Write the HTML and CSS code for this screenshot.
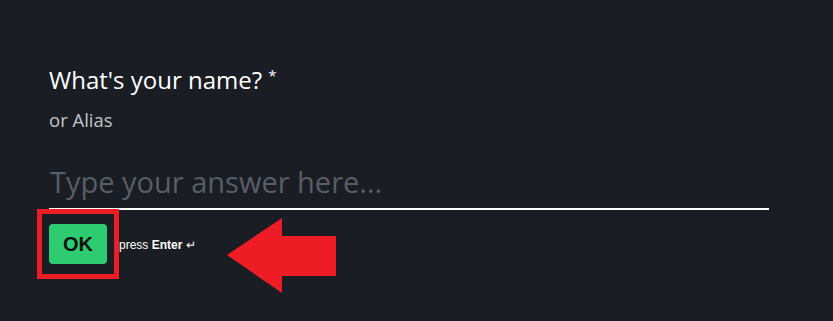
FILE: index.html
```html
<!DOCTYPE html>
<html>
<head>
  <title>Name question</title>
  <link rel="stylesheet" href="styles.css">
</head>
<body>
  <!-- Question block -->
  <div class="question">
    <h2 class="question-title">What's your name? <span class="required">*</span></h2>
    <div class="question-hint">or Alias</div>

    <input type="text" class="answer" placeholder="Type your answer here...">

    <div class="actions">
      <button class="ok-btn">OK</button>
      <span class="press-hint">press <b>Enter</b> &#8629;</span>

      <!-- Annotations drawn over the screenshot -->
      <div class="highlight-box"></div>
      <svg class="arrow" width="110" height="76" viewBox="0 0 110 76">
        <polygon points="0,37 55,0 55,18 109,18 109,58 55,58 55,75" fill="#ee1c25"/>
      </svg>
    </div>
  </div>
</body>
</html>
```

FILE: styles.css
```css
/* Page */
body {
  margin: 0;
  padding: 0;
  background-color: #1a1d24;
  font-family: "Open Sans", "Noto Sans", sans-serif;
  color: #ffffff;
  height: 321px;
  overflow: hidden;
}

/* Question block */
.question {
  padding: 64px 64px 0 49px;
}

.question-title {
  margin: 0;
  font-size: 24px;
  font-weight: 400;
  line-height: 32px;
  color: #ffffff;
}

.required {
  font-size: 15px;
  line-height: 15px;
  vertical-align: 8px;
}

.question-hint {
  margin-top: 12px;
  font-size: 18.5px;
  line-height: 24px;
  color: #c2c4c8;
}

/* Answer input */
.answer {
  display: block;
  box-sizing: content-box;
  width: 719px;
  height: 36px;
  margin-top: 32px;
  padding: 0 0 8px 1px;
  border: none;
  border-bottom: 2px solid #ffffff;
  background: transparent;
  font-family: "Open Sans", "Noto Sans", sans-serif;
  font-size: 29px;
  line-height: 36px;
  color: #ffffff;
  outline: none;
}

.answer::placeholder {
  color: #595d65;
}

/* OK row */
.actions {
  position: relative;
  display: flex;
  align-items: center;
  margin-top: 14px;
}

.ok-btn {
  width: 58px;
  height: 40px;
  border: none;
  border-radius: 4px;
  background-color: #2ecc71;
  color: #0c0f0c;
  font-family: Arial, "Liberation Sans", sans-serif;
  font-size: 20px;
  font-weight: 700;
  padding: 0;
}

.press-hint {
  margin-left: 12px;
  margin-top: 2px;
  font-family: Arial, "Liberation Sans", sans-serif;
  font-size: 12px;
  color: #ffffff;
}

/* Red annotation box round the button */
.highlight-box {
  position: absolute;
  left: -12px;
  top: -15px;
  width: 72px;
  height: 60px;
  border: 5px solid #ee1c25;
}

/* Red arrow pointing at the button */
.arrow {
  position: absolute;
  left: 178px;
  top: -6px;
}
```
